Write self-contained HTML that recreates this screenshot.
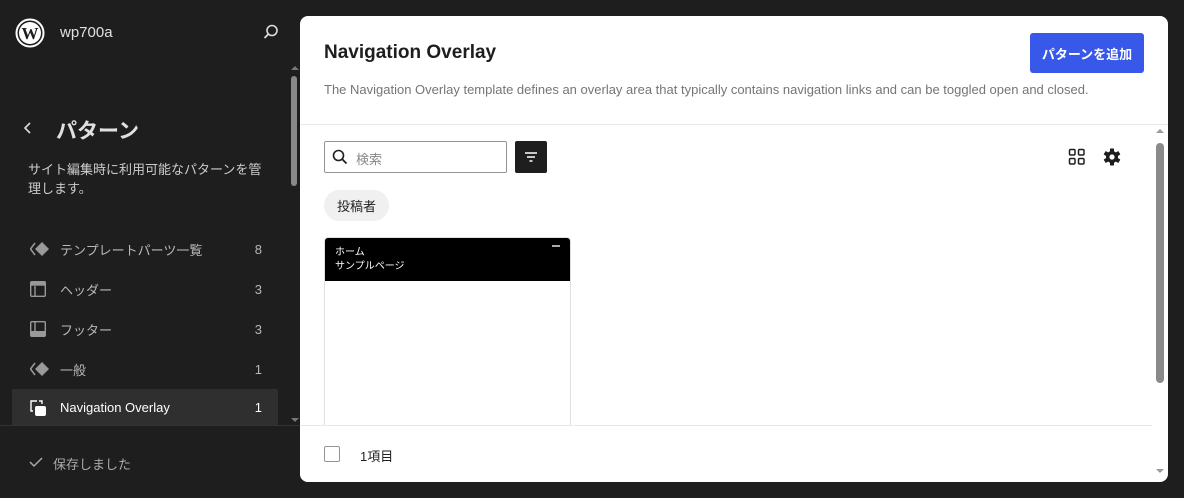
<!DOCTYPE html>
<html><head><meta charset="utf-8"><style>
*{box-sizing:border-box;margin:0;padding:0}
body{width:1184px;height:498px;background:#1e1e1e;font-family:"Liberation Sans","Noto Sans CJK JP",sans-serif;position:relative;overflow:hidden;color:#1e1e1e}
.abs{position:absolute}
.item{position:absolute;left:12px;width:266px;height:38px;display:flex;align-items:center;font-size:13px;color:#b8b8b8}
.item .ic{position:absolute;left:18px;top:11px}
.item .t{position:absolute;left:48px}
.item .n{position:absolute;right:16px}
.panel{position:absolute;left:300px;top:16px;width:868px;height:466px;background:#fff;border-radius:8px;overflow:hidden}
</style></head><body>
<svg class="abs" style="left:15px;top:18px" width="30" height="30" viewBox="0 0 30 30"><circle cx="15" cy="15" r="13.5" fill="none" stroke="#fff" stroke-width="2"/><circle cx="15" cy="15" r="11" fill="#fff"/><text x="15" y="21" text-anchor="middle" font-family="Liberation Serif" font-weight="bold" font-size="17" fill="#1e1e1e">W</text></svg>
<div class="abs" style="left:60px;top:24px;font-size:15px;color:#e0e0e0">wp700a</div>
<svg class="abs" style="left:262px;top:23px" width="18" height="18" viewBox="0 0 18 18"><circle cx="10" cy="7.5" r="5" fill="none" stroke="#ddd" stroke-width="1.6"/><path d="M6.5 11 L2.5 15" stroke="#ddd" stroke-width="1.8"/></svg>
<div class="abs" style="left:291px;top:66px;width:0;height:0;border:4px solid transparent;border-bottom-color:#777;border-top:none"></div>
<div class="abs" style="left:291px;top:76px;width:6px;height:110px;background:#888;border-radius:3px"></div>
<div class="abs" style="left:291px;top:418px;width:0;height:0;border:4px solid transparent;border-top-color:#777;border-bottom:none"></div>
<svg class="abs" style="left:22px;top:121px" width="12" height="14" viewBox="0 0 12 14"><path d="M8 2 L3 7 L8 12" fill="none" stroke="#ddd" stroke-width="1.6"/></svg>
<div class="abs" style="left:56px;top:115px;font-size:21px;font-weight:bold;color:#e0e0e0">パターン</div>
<div class="abs" style="left:28px;top:160px;width:240px;font-size:13px;line-height:19px;color:#ccc">サイト編集時に利用可能なパターンを管理します。</div>
<div class="item" style="top:230px"><svg class="ic" width="20" height="16" viewBox="0 0 20 16"><path d="M5 2 L0.5 8 L5 14" fill="none" stroke="#999" stroke-width="1.5"/><path d="M12 1 L19 8 L12 15 L5 8Z" fill="#999"/></svg><span class="t">テンプレートパーツ一覧</span><span class="n">8</span></div>
<div class="item" style="top:270px"><svg class="ic" width="16" height="16" viewBox="0 0 16 16"><rect x="0.7" y="0.7" width="14.6" height="14.6" rx="1" fill="none" stroke="#999" stroke-width="1.4"/><rect x="0.7" y="0.7" width="14.6" height="4" fill="#999"/><path d="M5 5 V15" stroke="#999" stroke-width="1.4"/></svg><span class="t">ヘッダー</span><span class="n">3</span></div>
<div class="item" style="top:310px"><svg class="ic" width="16" height="16" viewBox="0 0 16 16"><rect x="0.7" y="0.7" width="14.6" height="14.6" rx="1" fill="none" stroke="#999" stroke-width="1.4"/><rect x="0.7" y="10" width="14.6" height="5.3" fill="#999"/><path d="M5 1 V10" stroke="#999" stroke-width="1.4"/></svg><span class="t">フッター</span><span class="n">3</span></div>
<div class="item" style="top:350px"><svg class="ic" width="20" height="16" viewBox="0 0 20 16"><path d="M5 2 L0.5 8 L5 14" fill="none" stroke="#999" stroke-width="1.5"/><path d="M12 1 L19 8 L12 15 L5 8Z" fill="#999"/></svg><span class="t">一般</span><span class="n">1</span></div>
<div class="item" style="top:389px;background:#2f2f2f;border-radius:2px;color:#fff;height:37px"><svg class="ic" width="18" height="18" viewBox="0 0 18 18"><path d="M7 1 H1 V11 H3" fill="none" stroke="#fff" stroke-width="1.4"/><path d="M9 1 H12 V4" fill="none" stroke="#fff" stroke-width="1.4"/><rect x="5" y="6" width="11" height="10" rx="2" fill="#fff"/></svg><span class="t">Navigation Overlay</span><span class="n">1</span></div>
<div class="abs" style="left:0;top:425px;width:300px;height:1px;background:#333"></div>
<svg class="abs" style="left:29px;top:456px" width="14" height="12" viewBox="0 0 14 12"><path d="M1 6 L5 10 L13 2" fill="none" stroke="#aaa" stroke-width="1.5"/></svg>
<div class="abs" style="left:53px;top:454px;font-size:13px;color:#aaa">保存しました</div>

<div class="panel">
<div class="abs" style="left:24px;top:26px;font-size:19px;font-weight:600">Navigation Overlay</div>
<div class="abs" style="left:730px;top:17px;width:114px;height:40px;background:#3858e9;border-radius:3px;color:#fff;font-size:13px;font-weight:bold;display:flex;align-items:center;justify-content:center">パターンを追加</div>
<div class="abs" style="left:24px;top:66px;font-size:13px;color:#757575;white-space:nowrap">The Navigation Overlay template defines an overlay area that typically contains navigation links and can be toggled open and closed.</div>
<div class="abs" style="left:0;top:108px;width:868px;height:1px;background:#e8e8e8"></div>
<div class="abs" style="left:24px;top:125px;width:183px;height:32px;border:1px solid #949494;border-radius:2px"></div>
<svg class="abs" style="left:32px;top:133px" width="16" height="16" viewBox="0 0 16 16"><circle cx="6.5" cy="6.5" r="5" fill="none" stroke="#1e1e1e" stroke-width="1.6"/><path d="M10 10 L14.5 14.5" stroke="#1e1e1e" stroke-width="1.8"/></svg>
<div class="abs" style="left:56px;top:133px;font-size:13px;color:#888">検索</div>
<div class="abs" style="left:215px;top:125px;width:32px;height:32px;background:#1e1e1e;border-radius:2px"></div>
<svg class="abs" style="left:222px;top:132px" width="18" height="18" viewBox="0 0 18 18"><path d="M3 5 H15 M5 9 H13 M7.5 13 H10.5" stroke="#fff" stroke-width="1.5"/></svg>
<div class="abs" style="left:24px;top:174px;width:65px;height:31px;background:#f0f0f0;border-radius:16px;font-size:13px;display:flex;align-items:center;justify-content:center">投稿者</div>
<svg class="abs" style="left:768px;top:132px" width="18" height="18" viewBox="0 0 18 18"><g fill="none" stroke="#1e1e1e" stroke-width="1.5"><rect x="1.5" y="1.5" width="5.5" height="5.5" rx="1.3"/><rect x="10.5" y="1.5" width="5.5" height="5.5" rx="1.3"/><rect x="1.5" y="10.5" width="5.5" height="5.5" rx="1.3"/><rect x="10.5" y="10.5" width="5.5" height="5.5" rx="1.3"/></g></svg>
<svg class="abs" style="left:803px;top:132px" width="18" height="18" viewBox="0 0 18 18"><g fill="#1e1e1e"><circle cx="9" cy="9" r="6"/><rect x="7" y="0.5" width="4" height="17" rx="0.5"/><rect x="7" y="0.5" width="4" height="17" rx="0.5" transform="rotate(60 9 9)"/><rect x="7" y="0.5" width="4" height="17" rx="0.5" transform="rotate(120 9 9)"/></g><circle cx="9" cy="9" r="2.6" fill="#fff"/></svg>
<div class="abs" style="left:24px;top:221px;width:247px;height:200px;border:1px solid #e0e0e0;border-radius:4px 4px 0 0;overflow:hidden">
<div style="height:43px;background:#000;color:#fff;font-size:10px;line-height:14px;padding:8px 10px">ホーム<br>サンプルページ</div>
<div class="abs" style="right:10px;top:7px;width:8px;height:2px;background:#aaa"></div>
</div>
<div class="abs" style="left:0;top:409px;width:852px;height:1px;background:#e8e8e8;"></div>
<div class="abs" style="left:0;top:410px;width:852px;height:56px;background:#fff"></div>
<div class="abs" style="left:24px;top:430px;width:16px;height:16px;border:1px solid #949494;border-radius:2px"></div>
<div class="abs" style="left:60px;top:430px;font-size:13px;color:#1e1e1e">1項目</div>
<div class="abs" style="left:856px;top:113px;width:0;height:0;border:4px solid transparent;border-bottom-color:#999;border-top:none"></div>
<div class="abs" style="left:856px;top:127px;width:8px;height:240px;background:#8a8a8a;border-radius:4px"></div>
<div class="abs" style="left:856px;top:453px;width:0;height:0;border:4px solid transparent;border-top-color:#999;border-bottom:none"></div>
</div>
</body></html>
